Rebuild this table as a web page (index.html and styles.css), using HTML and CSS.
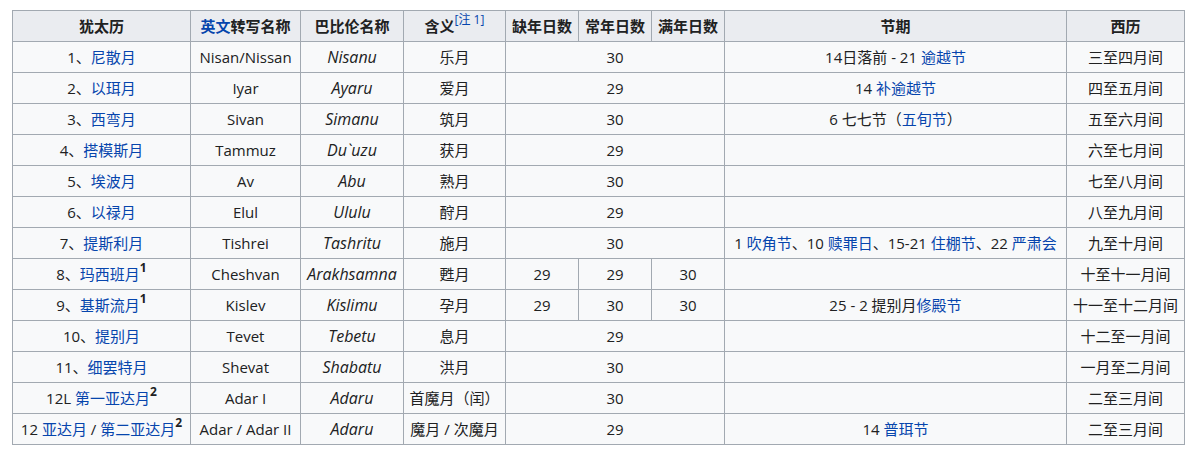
FILE: index.html
```html
<!DOCTYPE html>
<html lang="zh">
<head>
<meta charset="utf-8">
<link rel="stylesheet" href="styles.css">
</head>
<body>
<table class="wikitable">
<colgroup>
<col class="c1"><col class="c2"><col class="c3"><col class="c4"><col class="c5"><col class="c6"><col class="c7"><col class="c8"><col class="c9">
</colgroup>
<thead>
<tr>
<th>犹太历</th>
<th><a>英文</a>转写名称</th>
<th>巴比伦名称</th>
<th>含义<sup class="ref"><a>[注 1]</a></sup></th>
<th>缺年日数</th>
<th>常年日数</th>
<th>满年日数</th>
<th>节期</th>
<th>西历</th>
</tr>
</thead>
<tbody>
<tr><td>1、<a>尼散月</a></td><td>Nisan/Nissan</td><td><i>Nisanu</i></td><td>乐月</td><td colspan="3">30</td><td>14日落前 - 21 <a>逾越节</a></td><td>三至四月间</td></tr>
<tr><td>2、<a>以珥月</a></td><td>Iyar</td><td><i>Ayaru</i></td><td>爱月</td><td colspan="3">29</td><td>14 <a>补逾越节</a></td><td>四至五月间</td></tr>
<tr><td>3、<a>西弯月</a></td><td>Sivan</td><td><i>Simanu</i></td><td>筑月</td><td colspan="3">30</td><td>6 七七节（<a>五旬节</a>）</td><td>五至六月间</td></tr>
<tr><td>4、<a>搭模斯月</a></td><td>Tammuz</td><td><i>Du`uzu</i></td><td>获月</td><td colspan="3">29</td><td></td><td>六至七月间</td></tr>
<tr><td>5、<a>埃波月</a></td><td>Av</td><td><i>Abu</i></td><td>熟月</td><td colspan="3">30</td><td></td><td>七至八月间</td></tr>
<tr><td>6、<a>以禄月</a></td><td>Elul</td><td><i>Ululu</i></td><td>酧月</td><td colspan="3">29</td><td></td><td>八至九月间</td></tr>
<tr><td>7、<a>提斯利月</a></td><td>Tishrei</td><td><i>Tashritu</i></td><td>施月</td><td colspan="3">30</td><td>1 <a>吹角节</a>、10 <a>赎罪日</a>、15-21 <a>住棚节</a>、22 <a>严肃会</a></td><td>九至十月间</td></tr>
<tr><td>8、<a>玛西班月</a><sup class="note">1</sup></td><td>Cheshvan</td><td><i>Arakhsamna</i></td><td>甦月</td><td>29</td><td>29</td><td>30</td><td></td><td>十至十一月间</td></tr>
<tr><td>9、<a>基斯流月</a><sup class="note">1</sup></td><td>Kislev</td><td><i>Kislimu</i></td><td>孕月</td><td>29</td><td>30</td><td>30</td><td>25 - 2 提别月<a>修殿节</a></td><td>十一至十二月间</td></tr>
<tr><td>10、<a>提别月</a></td><td>Tevet</td><td><i>Tebetu</i></td><td>息月</td><td colspan="3">29</td><td></td><td>十二至一月间</td></tr>
<tr><td>11、<a>细罢特月</a></td><td>Shevat</td><td><i>Shabatu</i></td><td>洪月</td><td colspan="3">30</td><td></td><td>一月至二月间</td></tr>
<tr><td>12L <a>第一亚达月</a><sup class="note">2</sup></td><td>Adar I</td><td><i>Adaru</i></td><td>首魔月（闰）</td><td colspan="3">30</td><td></td><td>二至三月间</td></tr>
<tr><td>12 <a>亚达月</a> / <a>第二亚达月</a><sup class="note">2</sup></td><td>Adar / Adar II</td><td><i>Adaru</i></td><td>魔月 / 次魔月</td><td colspan="3">29</td><td>14 <a>普珥节</a></td><td>二至三月间</td></tr>
</tbody>
</table>
</body>
</html>
```
FILE: styles.css
```css
html, body {
  margin: 0;
  padding: 0;
  background: #ffffff;
}
body {
  padding: 10px 0 0 12px;
  font-family: "Open Sans", "Noto Sans CJK SC", sans-serif;
  font-size: 15px;
  color: #202122;
}
.wikitable {
  border-collapse: collapse;
  table-layout: fixed;
  width: 1173px;
  background: #f8f9fa;
  border: 1px solid #a2a9b1;
}
.c1 { width: 178px; }
.c2 { width: 110px; }
.c3 { width: 103px; }
.c4 { width: 102px; }
.c5 { width: 73px; }
.c6 { width: 73px; }
.c7 { width: 73px; }
.c8 { width: 342px; }
.c9 { width: 118px; }
.wikitable th,
.wikitable td {
  border: 1px solid #a2a9b1;
  padding: 4px 4px;
  height: 22px;
  line-height: 22px;
  text-align: center;
  white-space: nowrap;
  overflow: hidden;
}
.wikitable th {
  background: #eaecf0;
  font-weight: bold;
}
.wikitable td i {
  font-size: 16px;
  line-height: 0;
}
.wikitable a {
  color: #0645ad;
  text-decoration: none;
}
.ref {
  font-size: 12px;
  line-height: 0;
  vertical-align: 8px;
  font-weight: normal;
}
.note {
  font-size: 12px;
  line-height: 0;
  font-weight: bold;
  vertical-align: 8px;
}
```
